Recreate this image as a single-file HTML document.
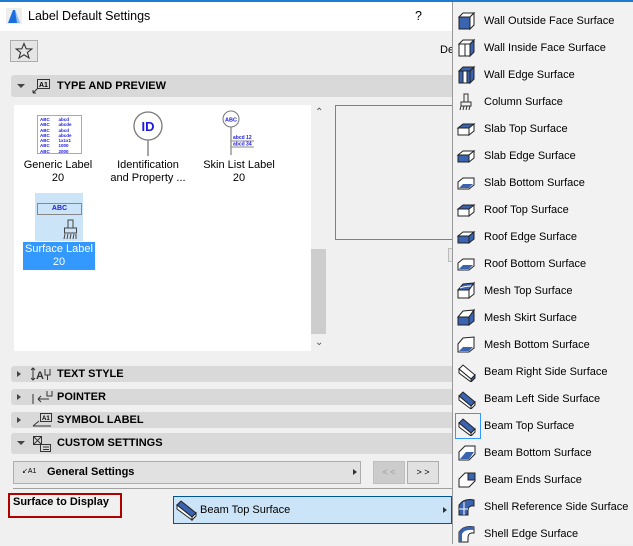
<!DOCTYPE html>
<html><head><meta charset="utf-8"><style>
*{box-sizing:border-box;margin:0;padding:0}
body{width:633px;height:544px;overflow:hidden;background:#f0f0f0;font-family:"Liberation Sans",sans-serif;font-size:11px;color:#000;position:relative}
.a{position:absolute}
.hdr{position:absolute;left:11px;width:445px;background:#d9d9d9;border-radius:3px;font-weight:bold;font-size:11px}
.hdr span{position:absolute;left:46px}
.tri{position:absolute;left:6px;width:0;height:0}
.tr{border-top:3px solid transparent;border-bottom:3px solid transparent;border-left:4px solid #444}
.td{border-left:4px solid transparent;border-right:4px solid transparent;border-top:4px solid #444}
.menu{position:absolute;left:452px;top:2px;width:181px;height:542px;background:#f2f2f2;border-left:1px solid #999}
.it{position:absolute;left:0;height:27px;width:181px}
.it svg{position:absolute;left:3px;top:5px}
.it span{position:absolute;left:31px;top:9px;font-size:11px;color:#000;white-space:nowrap}
.ctr{text-align:center;font-size:11px;position:absolute}
</style></head><body>
<div class="a" style="left:0;top:0;width:633px;height:2px;background:#1e7bd0"></div>
<div class="a" style="left:0;top:2px;width:633px;height:29px;background:#fff"></div>
<svg class="a" style="left:6px;top:8px" width="16" height="16"><rect width="16" height="16" fill="#eee"/><path d="M2 15 L7 2 L9 2 L14 15 Z" fill="#1b6ee0"/><path d="M9 2 L14 15 L11 15 Z" fill="#8fc0f5"/></svg>
<div class="a" style="left:28px;top:9px;font-size:12.5px">Label Default Settings</div>
<div class="a" style="left:415px;top:9px;font-size:12.5px">?</div>
<div class="a" style="left:10px;top:40px;width:28px;height:22px;border:1px solid #adadad;background:#e5e5e5"></div>
<svg class="a" style="left:15px;top:42px" width="18" height="18"><path d="M9 1.5 L11.2 6.8 L16.8 7 L12.4 10.5 L14 16 L9 12.8 L4 16 L5.6 10.5 L1.2 7 L6.8 6.8 Z" fill="none" stroke="#333" stroke-width="1.1"/></svg>
<div class="a" style="left:440px;top:44px;font-size:11px">De</div>

<div class="hdr" style="top:75px;height:22px"><div class="tri td" style="top:9px"></div>
<svg class="a" style="left:20px;top:3px" width="22" height="16"><path d="M2 15 L7 10 M2 15 L5 15 M2 15 L2 12" stroke="#333" fill="none"/><rect x="6.5" y="1.5" width="12" height="9" fill="none" stroke="#333"/><text x="8" y="9" font-size="7" font-family="Liberation Sans">A1</text></svg>
<span style="top:5px">TYPE AND PREVIEW</span></div>

<div class="a" style="left:14px;top:105px;width:297px;height:246px;background:#fff"></div>
<div class="a" style="left:311px;top:249px;width:15px;height:85px;background:#cdcdcd"></div>
<div class="a" style="left:315px;top:107px;font-size:10px;color:#555">&#8963;</div>
<div class="a" style="left:315px;top:337px;font-size:10px;color:#555">&#8964;</div>
<div class="a" style="left:37px;top:115px;width:45px;height:39px;border:1px solid #aaa;background:#fff;font-size:4.5px;line-height:5.3px;color:#1a1ae0;padding:1px 2px;font-weight:bold">ABC&nbsp;&nbsp;&nbsp;&nbsp;&nbsp;&nbsp;&nbsp;abcd<br>ABC&nbsp;&nbsp;&nbsp;&nbsp;&nbsp;&nbsp;&nbsp;abcde<br>ABC&nbsp;&nbsp;&nbsp;&nbsp;&nbsp;&nbsp;&nbsp;abcd<br>ABC&nbsp;&nbsp;&nbsp;&nbsp;&nbsp;&nbsp;&nbsp;abcde<br>ABC&nbsp;&nbsp;&nbsp;&nbsp;&nbsp;&nbsp;&nbsp;1x1x1<br>ABC&nbsp;&nbsp;&nbsp;&nbsp;&nbsp;&nbsp;&nbsp;1000<br>ABC&nbsp;&nbsp;&nbsp;&nbsp;&nbsp;&nbsp;&nbsp;2000</div>
<div class="ctr" style="left:18px;top:159px;width:80px;line-height:13px">Generic Label<br>20</div>
<svg class="a" style="left:132px;top:110px" width="32" height="48"><circle cx="16" cy="16" r="14" fill="#fff" stroke="#777" stroke-width="1.3"/><line x1="16" y1="30" x2="16" y2="46" stroke="#888" stroke-width="1.5"/><text x="16" y="21" text-anchor="middle" font-size="13" font-weight="bold" fill="#1a1ae0" font-family="Liberation Sans">ID</text></svg>
<div class="ctr" style="left:103px;top:159px;width:90px;line-height:13px">Identification<br>and Property ...</div>
<svg class="a" style="left:221px;top:110px" width="36" height="46"><circle cx="10" cy="9" r="8" fill="#fff" stroke="#777"/><text x="10" y="11.5" text-anchor="middle" font-size="5.5" font-weight="bold" fill="#1a1ae0" font-family="Liberation Sans">ABC</text><line x1="10" y1="17" x2="10" y2="45" stroke="#888" stroke-width="1.3"/><line x1="10" y1="31" x2="33" y2="31" stroke="#888"/><line x1="10" y1="37" x2="33" y2="37" stroke="#888"/><text x="12" y="29" font-size="5" fill="#1a1ae0" font-weight="bold" font-family="Liberation Sans">abcd 12</text><text x="12" y="35.5" font-size="5" fill="#1a1ae0" font-weight="bold" font-family="Liberation Sans">abcd 34</text></svg>
<div class="ctr" style="left:199px;top:159px;width:80px;line-height:13px">Skin List Label<br>20</div>
<div class="a" style="left:35px;top:193px;width:48px;height:48px;background:#cce4f7"></div>
<div class="a" style="left:37px;top:203px;width:45px;height:12px;border:1px solid #888;font-size:7px;font-weight:bold;color:#1a1ae0;text-align:center;line-height:10px">ABC</div>
<svg class="a" style="left:63px;top:219px" width="16" height="22"><rect x="5" y="1" width="5" height="8" fill="none" stroke="#444"/><rect x="1.5" y="9" width="12" height="5" fill="none" stroke="#444"/><path d="M2 15 L1 20 M5 15 L4 20 M8 15 L7 20 M11 15 L10 20 M13 15 L13 20" stroke="#444"/></svg>
<div class="ctr" style="left:23px;top:242px;width:72px;height:28px;background:#3399ff;color:#fff;line-height:13px;padding-top:1px">Surface Label<br>20</div>

<div class="a" style="left:335px;top:105px;width:120px;height:135px;border:1px solid #808080;border-right:none;background:#f0f0f0"></div>
<div class="a" style="left:448px;top:248px;width:6px;height:14px;border:1px solid #bbb;background:#e8e8e8"></div>

<div class="hdr" style="top:366px;height:16px"><div class="tri tr" style="top:5px"></div>
<svg class="a" style="left:20px;top:1px" width="22" height="15"><path d="M2 1 V13 M0 3 L2 1 L4 3 M0 11 L2 13 L4 11" stroke="#333" fill="none"/><text x="5" y="12" font-size="11" font-family="Liberation Sans" fill="#333">A</text><path d="M14 2 V8 H19 V2 M16.5 8 V13" stroke="#333" fill="none"/></svg>
<span style="top:2px">TEXT STYLE</span></div>
<div class="hdr" style="top:389px;height:16px"><div class="tri tr" style="top:5px"></div>
<svg class="a" style="left:20px;top:1px" width="22" height="15"><path d="M2 4 V14 M7 9 H18 M7 9 L10 6 M7 9 L10 12 M16 1 V6 H21 V1" stroke="#333" fill="none"/></svg>
<span style="top:2px">POINTER</span></div>
<div class="hdr" style="top:412px;height:16px"><div class="tri tr" style="top:5px"></div>
<svg class="a" style="left:20px;top:0px" width="22" height="16"><path d="M2 14 L8 9 M2 14 L5 14 M2 14 H20" stroke="#333" fill="none"/><rect x="9.5" y="1.5" width="11" height="8" fill="none" stroke="#333"/><text x="11" y="8" font-size="6" font-family="Liberation Sans">A1</text></svg>
<span style="top:2px">SYMBOL LABEL</span></div>
<div class="hdr" style="top:433px;height:21px"><div class="tri td" style="top:8px"></div>
<svg class="a" style="left:20px;top:2px" width="22" height="18"><rect x="2.5" y="1.5" width="8" height="8" fill="none" stroke="#333"/><path d="M2.5 1.5 L10.5 9.5 M10.5 1.5 L2.5 9.5" stroke="#333"/><rect x="9.5" y="9.5" width="10" height="7" fill="none" stroke="#333"/><path d="M12 12 H18 M12 14.5 H18" stroke="#333"/></svg>
<span style="top:4px">CUSTOM SETTINGS</span></div>

<div class="a" style="left:13px;top:461px;width:348px;height:23px;border:1px solid #adadad;background:#e1e1e1"></div>
<div class="a" style="left:22px;top:467px;font-size:7px">&#8601;A1</div>
<div class="a" style="left:47px;top:466px;font-weight:bold;font-size:11px">General Settings</div>
<div class="tri tr a" style="left:353px;top:469px;border-left-color:#333"></div>
<div class="a" style="left:373px;top:461px;width:32px;height:23px;border:1px solid #bfbfbf;background:#ccc;color:#999;font-size:9px;text-align:center;line-height:21px">&lt; &lt;</div>
<div class="a" style="left:407px;top:461px;width:32px;height:23px;border:1px solid #adadad;background:#e1e1e1;font-size:9px;text-align:center;line-height:21px">&gt; &gt;</div>
<div class="a" style="left:13px;top:488px;width:440px;height:1px;background:#a0a0a0"></div>
<div class="a" style="left:8px;top:493px;width:114px;height:25px;border:2px solid #b00000"></div>
<div class="a" style="left:13px;top:496px;font-weight:bold;font-size:11px">Surface to Display</div>
<div class="a" style="left:173px;top:496px;width:279px;height:28px;border:1px solid #005499;background:#cce4f7"></div>
<svg class="a" style="left:175px;top:499px" width="24" height="22"><path d="M2 6 L6 2 L21 14 L17 18 Z" fill="#3a63b0" stroke="#222"/><path d="M2 6 L17 18 L17 21 L2 10 Z" fill="#fff" stroke="#222"/><path d="M17 18 L21 14 L21 17 L17 21 Z" fill="#fff" stroke="#222"/></svg>
<div class="a" style="left:200px;top:504px;font-size:11px">Beam Top Surface</div>
<div class="tri tr a" style="left:443px;top:507px;border-left-color:#333"></div>

<div class="menu">
<div class="it" style="top:4px"><svg width="22" height="20"><path d="M3 6 L7 2 L18 2 L14 6 Z" fill="#fff" stroke="#222"/><rect x="3" y="6" width="11" height="12" fill="#3a63b0" stroke="#222"/><path d="M14 6 L18 2 L18 14 L14 18 Z" fill="#fff" stroke="#222"/></svg><span>Wall Outside Face Surface</span></div>
<div class="it" style="top:31px"><svg width="22" height="20"><path d="M3 6 L7 2 L18 2 L14 6 Z" fill="#fff" stroke="#222"/><rect x="3" y="6" width="11" height="12" fill="#fff" stroke="#222"/><path d="M14 6 L18 2 L18 14 L14 18 Z" fill="#3a63b0" stroke="#222"/><path d="M9 6 V18" stroke="#222"/></svg><span>Wall Inside Face Surface</span></div>
<div class="it" style="top:58px"><svg width="22" height="20"><path d="M3 6 L7 2 L18 2 L14 6 Z" fill="#3a63b0" stroke="#222"/><rect x="3" y="6" width="11" height="12" fill="#3a63b0" stroke="#222"/><rect x="7" y="6" width="4" height="12" fill="#fff" stroke="#222"/><path d="M14 6 L18 2 L18 14 L14 18 Z" fill="#3a63b0" stroke="#222"/></svg><span>Wall Edge Surface</span></div>
<div class="it" style="top:85px"><svg width="22" height="20"><rect x="8" y="2" width="4" height="8" fill="none" stroke="#333"/><rect x="5" y="10" width="10" height="4" fill="none" stroke="#333"/><path d="M5 14 L4 18 M8 14 L7 18 M11 14 L10 18 M14 14 L13 18" stroke="#333"/></svg><span>Column Surface</span></div>
<div class="it" style="top:112px"><svg width="22" height="20"><path d="M2 9 L7 5 L18 5 L13 9 Z" fill="#3a63b0" stroke="#222"/><rect x="2" y="9" width="11" height="7" fill="#fff" stroke="#222"/><path d="M13 9 L18 5 L18 12 L13 16 Z" fill="#fff" stroke="#222"/></svg><span>Slab Top Surface</span></div>
<div class="it" style="top:139px"><svg width="22" height="20"><path d="M2 9 L7 5 L18 5 L13 9 Z" fill="#fff" stroke="#222"/><rect x="2" y="9" width="11" height="7" fill="#3a63b0" stroke="#222"/><path d="M13 9 L18 5 L18 12 L13 16 Z" fill="#fff" stroke="#222"/></svg><span>Slab Edge Surface</span></div>
<div class="it" style="top:166px"><svg width="22" height="20"><path d="M2 9 L7 5 L18 5 L18 12 L13 16 L2 16 Z" fill="#fff" stroke="#222"/><path d="M3 15 L7 11 L17 11 L13 15 Z" fill="#3a63b0"/></svg><span>Slab Bottom Surface</span></div>
<div class="it" style="top:193px"><svg width="22" height="20"><path d="M2 9 L7 5 L18 5 L13 9 Z" fill="#3a63b0" stroke="#222"/><rect x="2" y="9" width="11" height="7" fill="#fff" stroke="#222"/><path d="M13 9 L18 5 L18 12 L13 16 Z" fill="#fff" stroke="#222"/></svg><span>Roof Top Surface</span></div>
<div class="it" style="top:220px"><svg width="22" height="20"><path d="M2 9 L7 5 L18 5 L13 9 Z" fill="#fff" stroke="#222"/><rect x="2" y="9" width="11" height="7" fill="#3a63b0" stroke="#222"/><path d="M13 9 L18 5 L18 12 L13 16 Z" fill="#3a63b0" stroke="#222"/></svg><span>Roof Edge Surface</span></div>
<div class="it" style="top:247px"><svg width="22" height="20"><path d="M2 9 L7 5 L18 5 L18 12 L13 16 L2 16 Z" fill="#fff" stroke="#222"/><path d="M3 15 L7 11 L17 11 L13 15 Z" fill="#3a63b0"/></svg><span>Roof Bottom Surface</span></div>
<div class="it" style="top:274px"><svg width="22" height="20"><path d="M2 9 L7 3 L18 2 L13 9 Z" fill="#3a63b0" stroke="#222"/><path d="M4 7 Q9 5 16 5" stroke="#fff" fill="none"/><rect x="2" y="9" width="11" height="8" fill="#fff" stroke="#222"/><path d="M13 9 L18 2 L18 13 L13 17 Z" fill="#fff" stroke="#222"/></svg><span>Mesh Top Surface</span></div>
<div class="it" style="top:301px"><svg width="22" height="20"><path d="M2 9 L7 3 L18 2 L13 9 Z" fill="#fff" stroke="#222"/><rect x="2" y="9" width="11" height="8" fill="#3a63b0" stroke="#222"/><path d="M13 9 L18 2 L18 13 L13 17 Z" fill="#3a63b0" stroke="#222"/></svg><span>Mesh Skirt Surface</span></div>
<div class="it" style="top:328px"><svg width="22" height="20"><path d="M2 9 L7 3 L18 2 L18 13 L13 17 L2 17 Z" fill="#fff" stroke="#222"/><path d="M3 16 L7 12 L17 12 L13 16 Z" fill="#3a63b0"/></svg><span>Mesh Bottom Surface</span></div>
<div class="it" style="top:355px"><svg width="22" height="20"><path d="M3 7 L7 3 L19 13 L15 17 Z" fill="#fff" stroke="#222"/><path d="M3 7 L15 17 L15 20 L3 11 Z" fill="#fff" stroke="#222"/><path d="M15 17 L19 13 L19 16 L15 20 Z" fill="#3a63b0" stroke="#222"/></svg><span>Beam Right Side Surface</span></div>
<div class="it" style="top:382px"><svg width="22" height="20"><path d="M3 7 L7 3 L19 13 L15 17 Z" fill="#3a63b0" stroke="#222"/><path d="M3 7 L15 17 L15 20 L3 11 Z" fill="#fff" stroke="#222"/><path d="M15 17 L19 13 L19 16 L15 20 Z" fill="#fff" stroke="#222"/></svg><span>Beam Left Side Surface</span></div>
<div class="it" style="top:409px"><div class="a" style="left:2px;top:2px;width:26px;height:26px;border:1px solid #3399ff"></div><svg width="22" height="20"><path d="M3 7 L7 3 L19 13 L15 17 Z" fill="#3a63b0" stroke="#222"/><path d="M3 7 L15 17 L15 20 L3 11 Z" fill="#fff" stroke="#222"/><path d="M15 17 L19 13 L19 16 L15 20 Z" fill="#fff" stroke="#222"/></svg><span>Beam Top Surface</span></div>
<div class="it" style="top:436px"><svg width="22" height="20"><path d="M3 9 L9 3 L19 3 L19 11 L13 17 L3 17 Z" fill="#fff" stroke="#222"/><path d="M4 16 L10 9 L18 9 L13 16 Z" fill="#3a63b0"/></svg><span>Beam Bottom Surface</span></div>
<div class="it" style="top:463px"><svg width="22" height="20"><path d="M3 9 L9 3 L19 3 L19 11 L13 17 L3 17 Z" fill="#fff" stroke="#222"/><rect x="12" y="3" width="7" height="7" fill="#3a63b0" stroke="#222"/></svg><span>Beam Ends Surface</span></div>
<div class="it" style="top:490px"><svg width="22" height="20"><path d="M3 8 Q8 1 18 3 L18 9 Q12 8 12 14 L12 18 L3 18 Z" fill="#3a63b0" stroke="#222"/><path d="M8 5 V18 M3 12 H12" stroke="#fff"/></svg><span>Shell Reference Side Surface</span></div>
<div class="it" style="top:517px"><svg width="22" height="20"><path d="M3 8 Q8 1 18 3 L18 9 Q12 8 12 14 L12 18 L3 18 Z" fill="#fff" stroke="#222"/><path d="M3 8 Q8 1 18 3 L18 6 Q8 5 6 10 L6 18 L3 18 Z" fill="#3a63b0"/></svg><span>Shell Edge Surface</span></div>
</div>
</body></html>
